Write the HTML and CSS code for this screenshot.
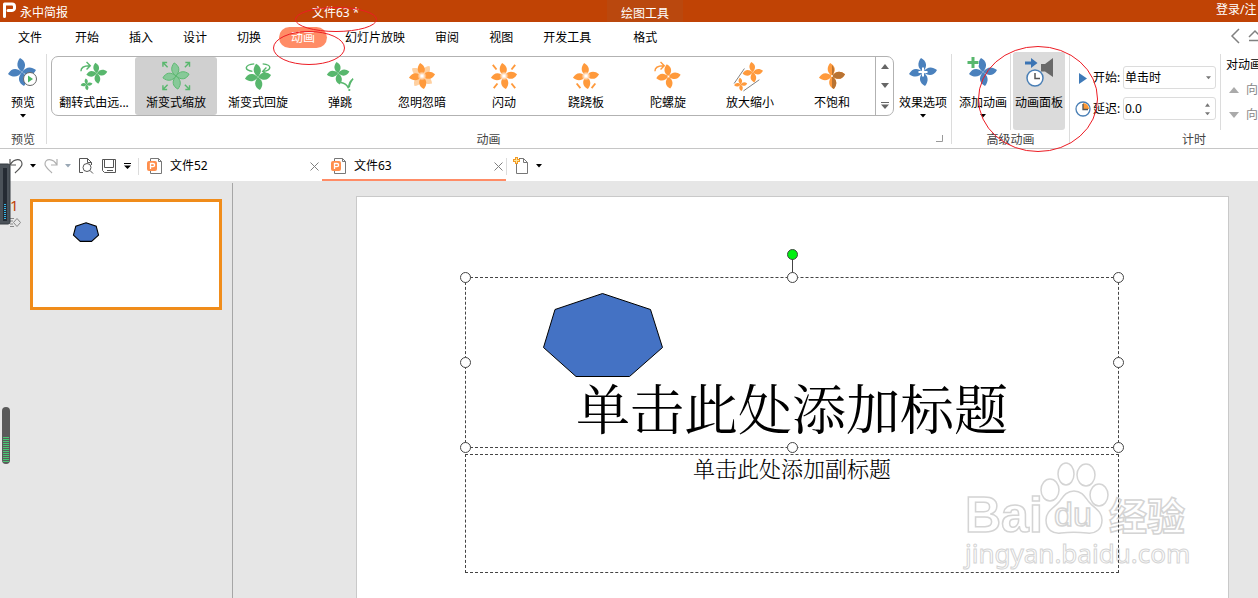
FILE: index.html
```html
<!DOCTYPE html>
<html lang="zh-CN">
<head>
<meta charset="utf-8">
<title>永中简报</title>
<link rel="stylesheet" href="styles.css">
</head>
<body>
<svg class="defs" aria-hidden="true">
  <defs>
    <path id="petal" d="M0 0C-5.500 -4 -6 -9 -2 -14C3.500 -11 5 -6 0 0Z"/>
    <g id="wheel">
      <use href="#petal"/><use href="#petal" transform="rotate(90)"/><use href="#petal" transform="rotate(180)"/><use href="#petal" transform="rotate(270)"/>
    </g>
    <radialGradient id="glow"><stop offset="0.200" stop-color="#fff"/><stop offset="1" stop-color="#fff" stop-opacity="0"/></radialGradient>
    <symbol id="down" viewBox="0 0 6 4"><path d="M0 0h6L3 3.500z" fill="currentColor"/></symbol>
    <symbol id="close" viewBox="0 0 9 9"><path d="M.5 .5l8 8M8.500 .5l-8 8" stroke="#808080" fill="none"/></symbol>
    <symbol id="pfile" viewBox="0 0 16 18">
      <path d="M3.500 4V1.500h8l3 3v12h-11v-3M11.500 1.500v3h3" fill="none" stroke="#777"/>
      <rect x="0" y="4" width="10" height="10" rx="2" fill="#ff8f4d"/>
      <path d="M3.500 12V6.500h2.500a1.500 1.500 0 0 1 0 3.200H3.500" fill="none" stroke="#fff" stroke-width="1.300"/>
    </symbol>
  </defs>
</svg>

<header class="titlebar">
  <div class="brand">
    <svg width="17" height="18" viewBox="0 0 17 18"><path d="M4.500 16.500V4h7.500a2.500 2.500 0 0 1 2.500 2.500v1A2.500 2.500 0 0 1 12 10.500H8" fill="none" stroke="#fff" stroke-width="3" stroke-linecap="round" stroke-linejoin="round"/></svg>
    <span>永中简报</span>
  </div>
  <div class="doc-name">文件63 *</div>
  <div class="context">绘图工具</div>
  <a class="login" href="#">登录/注</a>
</header>

<nav class="tabs">
  <button class="tab first">文件</button>
  <button class="tab">开始</button>
  <button class="tab">插入</button>
  <button class="tab">设计</button>
  <button class="tab">切换</button>
  <button class="tab active"><span>动画</span></button>
  <button class="tab">幻灯片放映</button>
  <button class="tab">审阅</button>
  <button class="tab">视图</button>
  <button class="tab">开发工具</button>
  <button class="tab format">格式</button>
  <div class="tab-tools">
    <svg width="28" height="16" viewBox="0 0 28 16"><path d="M9 1L2 8l7 7M19 9l6-6 6 6M19 12.500h12" fill="none" stroke="#808080" stroke-width="1.500"/></svg>
  </div>
</nav>

<section class="ribbon">
  <div class="group preview">
    <div class="group-body">
      <button class="big">
        <svg width="30" height="30" viewBox="0 0 30 30"><use href="#wheel" x="14" y="15" fill="#4a81bd"/><circle cx="22" cy="22" r="6.500" fill="#fff" stroke="#666"/><path d="M20 18.500v7l5-3.500z" fill="#4cb462"/></svg>
        <span>预览</span>
        <svg class="drop" width="6" height="4"><use href="#down"/></svg>
      </button>
    </div>
    <div class="group-name">预览</div>
  </div>
  <i class="rule"></i>
  <div class="group animation">
    <div class="group-body">
      <div class="gallery">
        <button class="effect green"><svg viewBox="0 0 30 30"><use href="#wheel" transform="translate(18 12) scale(.8)"/><use href="#wheel" transform="translate(7 24) scale(.45)"/><path d="M1 10C1 5 5 4 10 4M7 0l4 4-4 4" class="line"/></svg><span>翻转式由远...</span></button>
        <button class="effect green selected"><svg viewBox="0 0 30 30"><use href="#wheel" transform="translate(15 15)" fill="#87c998" stroke="#58b76d"/><path d="M1 5V.5h4.500M1 .5l5 5M25 .5h4.500V5M29.500 .5l-5 5M1 25v4.500h4.500M1 29.500l5-5M25 29.500h4.500V25M29.500 29.500l-5-5" class="line"/></svg><span>渐变式缩放</span></button>
        <button class="effect green"><svg viewBox="0 0 30 30"><use href="#wheel" transform="translate(15 16)"/><path d="M11 2C0 3 0 9 9 10M20 2c11 1 9 7 1 8M24 6l-4 4 4 3" class="line"/></svg><span>渐变式回旋</span></button>
        <button class="effect green"><svg viewBox="0 0 30 30"><use href="#wheel" transform="translate(13 12) scale(.86)"/><path d="M16 22q6 1 8 6q1-8 5-10q-4 5-4 9" class="line"/><circle cx="25" cy="30" r="1.200"/></svg><span>弹跳</span></button>
        <button class="effect"><svg viewBox="0 0 30 30"><use href="#wheel" transform="translate(15 15) rotate(45) scale(.95)" fill="#ffd0a0"/><use href="#wheel" transform="translate(15 15)"/><circle cx="15" cy="15" r="5" fill="url(#glow)"/></svg><span>忽明忽暗</span></button>
        <button class="effect"><svg viewBox="0 0 30 30"><use href="#wheel" transform="translate(15 15)"/><circle cx="15" cy="15" r="5" fill="url(#glow)"/><path d="M3 3l4 5M27 3l-4 5M4 28l4-5M27 28l-4-5" class="line thick"/></svg><span>闪动</span></button>
        <button class="effect"><svg viewBox="0 0 30 30"><use href="#wheel" transform="translate(15 15)"/><circle cx="15" cy="15" r="5" fill="url(#glow)"/><path d="M5 23l4 5M25 23l-4 5" class="line thick"/></svg><span>跷跷板</span></button>
        <button class="effect"><svg viewBox="0 0 30 30"><use href="#wheel" transform="translate(15.500 15.500) scale(.93)"/><circle cx="15.500" cy="15.500" r="1" fill="#fff"/><path d="M1 10C1 5 5 4 10 4M7 0l4 4-4 4" class="line"/></svg><span>陀螺旋</span></button>
        <button class="effect"><svg viewBox="0 0 30 30"><use href="#wheel" transform="translate(18 11) scale(.78)"/><use href="#wheel" transform="translate(5 24) scale(.5)"/><path d="M-2 23L9 7M8 31l17-12" fill="none" stroke="#777"/></svg><span>放大缩小</span></button>
        <button class="effect"><svg viewBox="0 0 30 30"><use href="#wheel" transform="translate(15 15)"/><g fill="#b87333"><use href="#petal" transform="translate(15 15) rotate(90)"/><path d="M15 15V3C18 7 18 11 15 15ZM15 15V27.500L17 29C21 24 20.500 19 15 15Z"/></g><circle cx="15" cy="15" r="1" fill="#fff"/></svg><span>不饱和</span></button>
        <div class="gallery-scroll">
          <button aria-label="上一行"><svg width="8" height="5" viewBox="0 0 8 5"><path d="M0 5h8L4 0z"/></svg></button>
          <button aria-label="下一行"><svg width="8" height="5" viewBox="0 0 8 5"><path d="M0 0h8L4 5z"/></svg></button>
          <button aria-label="更多"><svg width="8" height="7" viewBox="0 0 8 7"><path d="M0 0h8v1H0zM0 2.500h8L4 7z"/></svg></button>
        </div>
      </div>
      <button class="big">
        <svg width="30" height="30" viewBox="0 0 30 30"><use href="#wheel" x="15" y="15" fill="#4a81bd"/><path d="M15 10.500v9M10.500 15h9" stroke="#fff" stroke-width="2"/></svg>
        <span>效果选项</span>
        <svg class="drop" width="6" height="4"><use href="#down"/></svg>
      </button>
    </div>
    <div class="group-name with-launcher"><span>动画</span><svg width="7" height="7" viewBox="0 0 7 7"><path d="M6.500 0v6.500H0" fill="none" stroke="#999"/></svg></div>
  </div>
  <i class="rule"></i>
  <div class="group advanced">
    <div class="group-body">
      <button class="big">
        <svg width="30" height="30" viewBox="0 0 30 30"><use href="#wheel" x="15" y="15" fill="#4a81bd"/><path d="M5 0v12M0 6h11" stroke="#fff" stroke-width="5"/><path d="M5 0v11M-.5 5.500h11" stroke="#58b76d" stroke-width="3"/></svg>
        <span>添加动画</span>
        <svg class="drop" width="6" height="4"><use href="#down"/></svg>
      </button>
      <i class="rule short"></i>
      <button class="big pressed">
        <svg width="30" height="30" viewBox="0 0 30 30"><path d="M1 4.500h6V1l6.500 5L7 11V7.500H1z" fill="#3b74b4"/><path d="M17 7h4l8-6v19l-8-5.500h-4z" fill="#696969"/><circle cx="11" cy="21" r="8" fill="#fff" stroke="#4a7fb5" stroke-width="1.500"/><path d="M11 16v5.500h5" fill="none" stroke="#555" stroke-width="1.500"/></svg>
        <span>动画面板</span>
      </button>
    </div>
    <div class="group-name">高级动画</div>
  </div>
  <i class="rule"></i>
  <div class="group timing">
    <div class="group-body">
      <div class="fields">
        <div class="field">
          <svg width="16" height="16" viewBox="0 0 16 16"><path d="M4 3l8 5.500L4 14z" fill="#3f7ab8"/></svg>
          <label for="start">开始:</label>
          <div class="control"><select id="start"><option>单击时</option></select><svg class="caret" width="5" height="4"><use href="#down"/></svg></div>
        </div>
        <div class="field">
          <svg width="16" height="16" viewBox="0 0 16 16"><circle cx="8" cy="8" r="7" fill="#fff" stroke="#4a7fb5" stroke-width="1.300"/><path d="M8 8V2a6 6 0 0 1 6 6z" fill="#ff9933"/><path d="M8 3v5.500h5" fill="none" stroke="#555" stroke-width="1.300"/></svg>
          <label for="delay">延迟:</label>
          <div class="control"><input id="delay" type="text" value="0.0">
            <div class="spin"><button aria-label="增加"><svg width="5" height="4" viewBox="0 0 6 4"><path d="M0 4h6L3 0z"/></svg></button><button aria-label="减少"><svg width="5" height="4"><use href="#down"/></svg></button></div></div>
        </div>
      </div>
      <i class="rule short"></i>
      <div class="reorder">
        <span>对动画</span>
        <button disabled><svg width="10" height="6" viewBox="0 0 10 6"><path d="M0 6h10L5 0z"/></svg>向</button>
        <button disabled><svg width="10" height="6" viewBox="0 0 10 6"><path d="M0 0h10L5 6z"/></svg>向</button>
      </div>
    </div>
    <div class="group-name">计时</div>
  </div>
</section>

<div class="toolbar">
  <div class="quick">
    <button aria-label="撤销"><svg width="14" height="16" viewBox="0 0 14 16"><path d="M1 1v6h6M1 7C5 0 13 0 13 6c0 3-3 5-7 9" fill="none" stroke="#555" stroke-width="1.200"/></svg></button>
    <button class="arrow" aria-label="撤销列表"><svg width="6" height="4"><use href="#down"/></svg></button>
    <button aria-label="重做"><svg width="14" height="16" viewBox="0 0 14 16"><path d="M13 1v6H7M13 7C9 0 1 0 1 6c0 3 3 5 7 9" fill="none" stroke="#b0b0b0" stroke-width="1.200"/></svg></button>
    <button class="arrow dim" aria-label="重做列表"><svg width="6" height="4"><use href="#down"/></svg></button>
    <button aria-label="打印预览"><svg width="14" height="16" viewBox="0 0 14 16"><path d="M4 14.500H.5V.5h8l4 4V7M8.500 .5v4h4" fill="none" stroke="#555"/><circle cx="8" cy="9.500" r="4" fill="none" stroke="#555"/><path d="M11 12.500l3 3" stroke="#555"/></svg></button>
    <button class="save" aria-label="保存"><svg width="14" height="14" viewBox="0 0 14 14"><path d="M.5 .5h13v13H2.500L.5 11.500zM2.500 .5v8h9v-8M5 11.500h6" fill="none" stroke="#555"/></svg></button>
    <button class="custom" aria-label="自定义"><svg width="7" height="6" viewBox="0 0 7 6"><path d="M0 0h7v1H0zM0 2.500h7L3.500 6z"/></svg></button>
  </div>
  <i class="rule file-rule"></i>
  <div class="file-tab"><svg width="16" height="18"><use href="#pfile"/></svg><span>文件52</span><button aria-label="关闭"><svg width="9" height="9"><use href="#close"/></svg></button></div>
  <div class="file-tab current"><svg width="16" height="18"><use href="#pfile"/></svg><span>文件63</span><button aria-label="关闭"><svg width="9" height="9"><use href="#close"/></svg></button></div>
  <i class="rule file-rule"></i>
  <button class="new" aria-label="新建"><svg width="16" height="18" viewBox="0 0 16 18"><path d="M3.500 6v10.500h11v-11l-4-4H6M10.500 1.500v4h4" fill="none" stroke="#777"/><path d="M3.500 0v7M0 3.500h7" stroke="#f29a25" stroke-width="3"/><path d="M3.500 1v5M1 3.500h5" stroke="#ffe79a"/></svg><svg width="6" height="4"><use href="#down"/></svg></button>
</div>

<main class="workspace">
  <aside class="slides">
    <div class="slide-no"><span>1</span><svg width="11" height="11" viewBox="0 0 11 11"><path d="M7 1.500l3.500 4-3.500 4-3.500-4zM0 1.500h4M0 4h3M0 7h3M0 9.500h4" fill="none" stroke="#888"/></svg></div>
    <div class="thumb"><svg width="26" height="20" viewBox="0 0 122 94"><path d="M61 4l48 16 11 42-33 29H34L2 62 13 20z" fill="#4472c4" stroke="#000" stroke-width="5"/></svg></div>
  </aside>
  <div class="stage">
    <div class="slide">
      <svg class="watermark" width="240" height="120" viewBox="0 0 240 120">
        <g fill="#fff" stroke="#d4d4d4" stroke-width="1.500">
          <text x="9" y="73" class="wm-bai">Bai</text>
          <ellipse cx="94" cy="31" rx="9" ry="11"/><ellipse cx="110" cy="15" rx="8" ry="11"/><ellipse cx="130" cy="16" rx="9" ry="11"/><ellipse cx="143" cy="36" rx="9" ry="11"/>
          <path d="M118 32c-8 0-11 6-15 11-5 6-13 9-13 18 0 10 7 14 15 13 9-1 16-1 26 0 9 1 15-4 15-13 0-9-8-12-13-18-4-5-7-11-15-11z"/>
          <text x="98" y="67" class="wm-du">du</text>
          <text x="153" y="71" class="wm-cn">经验</text>
          <text x="9" y="104" class="wm-url">jingyan.baidu.com</text>
        </g>
      </svg>
      <div class="holder subtitle">单击此处添加副标题</div>
      <div class="holder title">单击此处添加标题
        <i class="stem"></i><i class="knob rotate"></i>
        <i class="knob tl"></i><i class="knob tc"></i><i class="knob tr"></i><i class="knob ml"></i><i class="knob mr"></i><i class="knob bl"></i><i class="knob bc"></i><i class="knob br"></i>
      </div>
      <svg class="shape" width="122" height="86" viewBox="0 0 122 86"><path d="M60.500 1.500l48 16 12 38-33 29H34L1.500 55.500 13 17.500z" fill="#4472c4" stroke="#000"/></svg>
    </div>
  </div>
</main>

<svg class="meter dark" width="11" height="62" viewBox="0 0 11 62"><rect x="-2" y="1" width="12" height="60" rx="2" fill="#4b5259" stroke="#343a40"/><rect x="3" y="5" width="4" height="53" fill="#252b33"/><path d="M5 41v16" stroke="#35b4e6" stroke-width="2" stroke-dasharray="1 1"/></svg>
<svg class="meter grey" width="8" height="57" viewBox="0 0 8 57"><rect width="8" height="57" rx="4" fill="#5a5a5a"/><path d="M4 30v25" stroke="#48c774" stroke-width="6" stroke-dasharray="1 1"/></svg>
<svg class="marks" width="1258" height="160" viewBox="0 0 1258 160"><g fill="none" stroke="#ed1c24"><ellipse cx="336" cy="19.500" rx="40.500" ry="12"/><ellipse cx="309" cy="48" rx="35.500" ry="16.500"/><ellipse cx="1038" cy="99" rx="59.500" ry="52.500"/></g></svg>
</body>
</html>
```
FILE: styles.css
```css
* { box-sizing: border-box; }
body {
  margin: 0;
  height: 100vh;
  display: flex;
  flex-direction: column;
  overflow: hidden;
  background: #fff;
  color: #000;
  font: 12px/16px "Noto Sans", "Noto Sans CJK SC", sans-serif;
}
svg { display: block; flex: none; overflow: visible; }
button, input, select { margin: 0; padding: 0; border: 0; background: none; color: inherit; font: inherit; }
.defs { position: absolute; width: 0; height: 0; }

.titlebar { display: flex; flex: none; height: 22px; background: #c04305; color: #fff; line-height: 26px; white-space: nowrap; overflow: hidden; }
.brand { display: flex; gap: 3px; width: 312px; }
.doc-name { width: 295px; }
.context { width: 76px; background: #ba480e; text-align: center; line-height: 28px; }
.login { margin-left: auto; width: 42px; color: #fff; text-decoration: none; line-height: 20px; }

.tabs { display: flex; flex: none; height: 30px; white-space: nowrap; }
.tab { padding: 2px 15px 0; }
.tab.first { padding-left: 18px; margin-right: 3px; }
.tab.active { padding: 1px 3px 0; }
.tab.active span { display: block; height: 21px; padding: 0 12px; border-radius: 11px; background: #ff8c66; color: #fff; line-height: 22px; }
.tab.format { margin-left: 12px; }
.tab-tools { margin-left: auto; width: 28px; padding-top: 6px; overflow: hidden; }

.ribbon { display: flex; flex: none; height: 97px; border-bottom: 1px solid #c6c6c6; overflow: hidden; white-space: nowrap; }
.rule { flex: none; width: 1px; margin: 2px 0 4px; background: #dcdcdc; }
.rule.short { margin: 2px 0 0; }
.group { display: flex; flex-direction: column; flex: none; }
.group-body { display: flex; flex: none; height: 78px; }
.group-name { height: 18px; line-height: 20px; text-align: center; color: #444; }
.with-launcher { display: flex; }
.with-launcher span { flex: 1; }
.with-launcher svg { margin: 5px 8px 0 10px; }
.preview { width: 46px; }
.big { width: 50px; display: flex; flex-direction: column; align-items: center; padding-top: 5px; border-radius: 3px; }
.preview .big { width: 46px; }
.big span { margin-top: 8px; }
.drop { margin-top: 3px; }
.pressed { width: 52px; background: #dbdbdb; }
.animation { padding: 0 0 0 4px; }
.animation .group-body { gap: 4px; padding-right: 4px; }
.advanced .group-body { gap: 2px; padding: 0 4px 0 6px; }

.gallery { display: flex; height: 60px; margin-top: 4px; border: 1px solid #b2b2b2; border-radius: 7px; padding-left: 1px; }
.effect { width: 82px; display: flex; flex-direction: column; align-items: center; padding-top: 5px; border-radius: 3px; color: #000; fill: #ff9a3c; }
.effect svg { width: 28px; height: 28px; stroke-width: 1px; }
.effect span { margin-top: 5px; }
.effect.green { fill: #58b76d; }
.effect.selected { background: #d0d0d0; }
.line { fill: none; stroke: #ff9a3c; stroke-width: 1.5px; }
.green .line { stroke: #58b76d; }
.line.thick { stroke-width: 2px; }
.gallery-scroll { display: flex; flex-direction: column; width: 18px; margin-left: 2px; border-left: 1px solid #b2b2b2; }
.gallery-scroll button { flex: 1; display: flex; align-items: center; justify-content: center; fill: #666; }
.gallery + .big { margin-right: -1px; }

.timing { width: 248px; }
.fields { display: flex; flex-direction: column; gap: 8px; width: 150px; padding: 14px 4px 0 5px; }
.field { display: flex; align-items: center; height: 23px; }
.field label { width: 32px; padding-left: 2px; }
.control { position: relative; flex: 1; height: 23px; border: 1px solid #dcdcdc; border-radius: 3px; }
.control select, .control input { display: block; width: 100%; height: 21px; padding-left: 1px; appearance: none; outline: 0; }
.caret { position: absolute; right: 4px; top: 9px; color: #777; }
.spin { position: absolute; right: 5px; top: 4px; bottom: 2px; display: flex; flex-direction: column; justify-content: space-between; fill: #777; color: #777; }
.spin button { height: 6px; }
.reorder { display: flex; flex-direction: column; gap: 9px; padding: 5px 0 0 5px; }
.reorder button { display: flex; align-items: center; gap: 7px; padding-left: 3px; color: #888; fill: #aaa; }

.toolbar { display: flex; flex: none; height: 32px; align-items: stretch; }
.quick { display: flex; align-items: center; width: 138px; padding: 2px 0 0 9px; }
.quick .arrow { margin: 0 8px 0 7px; }
.quick .arrow.dim { color: #9aa8b5; }
.quick .save { margin-left: 9px; }
.quick .custom { margin-left: 8px; }
.file-rule { margin: 9px 0 6px; }
.file-tab { display: flex; align-items: center; width: 184px; padding: 4px 3px 0 9px; border-bottom: 2px solid transparent; }
.file-rule + .file-tab { width: 183px; padding: 4px 3px 0 8px; }
.file-tab span { flex: 1; padding-left: 7px; }
.file-tab.current { border-color: #ff8c66; }
.new { display: flex; align-items: center; gap: 7px; padding: 2px 6px 0; }

.workspace { display: flex; flex: 1; min-height: 0; background: #e6e6e6; overflow: hidden; }
.slides { flex: none; display: flex; align-items: flex-start; width: 233px; margin-top: 2px; padding: 16px 10px 0 10px; border-right: 1px solid #a6a6a6; }
.slide-no { width: 20px; color: #c04305; font-size: 15px; line-height: 12px; }
.slide-no svg { margin-top: 6px; }
.thumb { flex: 1; height: 111px; border: 3px solid #f08c1a; background: #fff; padding: 20px 0 0 40px; }
.stage { flex: 1; display: flex; padding: 15px 29px 0 123px; }
.slide { position: relative; flex: 1; border: 1px solid #c9c9c9; border-bottom: 0; background: #fff; overflow: hidden; }
.holder { position: absolute; left: 108px; width: 654px; border: 1px dashed #444; text-align: center; font-family: "Noto Serif CJK SC", "Noto Sans CJK SC", serif; font-weight: 300; white-space: nowrap; }
.holder.title { top: 80px; height: 171px; padding-top: 97px; font-size: 54px; line-height: 64px; font-weight: 400; }
.holder.subtitle { top: 257px; height: 119px; font-size: 22px; line-height: 26px; }
.shape { position: absolute; left: 185px; top: 95px; }
.knob { position: absolute; width: 11px; height: 11px; border: 1px solid #444; border-radius: 50%; background: #fff; }
.tl, .ml, .bl { left: -6px; }
.tc, .bc, .rotate { left: 321px; }
.tr, .mr, .br { right: -6px; }
.tl, .tc, .tr { top: -6px; }
.ml, .mr { top: 79px; }
.bl, .bc, .br { bottom: -6px; }
.rotate { top: -29px; background: #00f010; }
.stem { position: absolute; left: 326px; top: -20px; width: 1px; height: 16px; background: #444; }
.watermark { position: absolute; right: 32px; top: 262px; }
.wm-bai { font: bold 50px "Liberation Sans", sans-serif; }
.wm-du { font: 34px "Liberation Sans", sans-serif; }
.wm-cn { font: bold 38px "Noto Sans CJK SC", sans-serif; }
.wm-url { font: 26px "Noto Sans", sans-serif; stroke-width: 1px; }

.meter { position: absolute; }
.meter.dark { left: 0; top: 163px; }
.meter.grey { left: 2px; top: 407px; }
.marks { position: absolute; left: 0; top: 0; pointer-events: none; }
```
